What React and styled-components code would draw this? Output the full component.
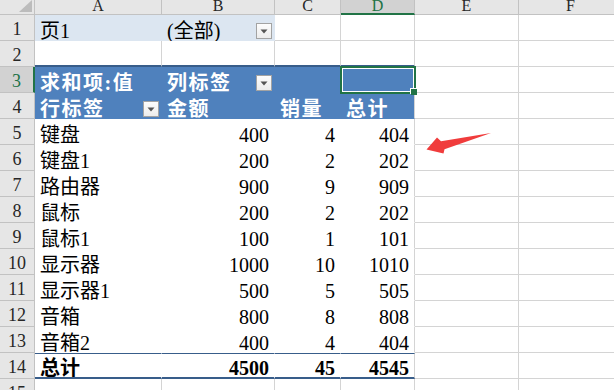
import React from 'react';
import styled, { createGlobalStyle } from 'styled-components';

const GRID = '#d4d4d4';
const BLUE = '#4f81bd';
const DARK = '#385d8a';
const LIGHT = '#dce6f1';
const GREEN = '#217346';
const HEAD = '#e6e6e6';
const HEAD_SEL = '#d2d2d2';
const HEAD_LINE = '#c2c2c2';

const G = `1px solid ${GRID}`;
const NONE = '1px solid transparent';

const Global = createGlobalStyle`
  html, body { margin: 0; padding: 0; background: #fff; overflow: hidden; }
  body { width: 614px; height: 390px; }
`;

const Sheet = styled.div`
  position: relative;
  display: grid;
  grid-template-columns: 35px 127px 113px 66px 74px 104px 104px;
  grid-template-rows: 15px repeat(15, 26px);
  width: 614px;
  height: 390px;
  overflow: hidden;
  font-family: "Liberation Serif", "Noto Sans CJK SC", serif;
`;

const Corner = styled.div`
  box-sizing: border-box;
  background: ${HEAD};
  border-right: 1px solid ${HEAD_LINE};
  border-bottom: 1px solid ${HEAD_LINE};
  display: flex;
  justify-content: flex-end;
  align-items: flex-end;
  padding: 0 2px 2px 0;
`;

const ColHead = styled.div`
  box-sizing: border-box;
  background: ${p => (p.$selected ? HEAD_SEL : HEAD)};
  border-right: 1px solid ${HEAD_LINE};
  border-bottom: ${p => (p.$selected ? `2px solid ${GREEN}` : `1px solid ${HEAD_LINE}`)};
  color: ${p => (p.$selected ? GREEN : '#262626')};
  font-size: 16px;
  line-height: 11px;
  text-align: center;
  overflow: hidden;
`;

const RowHead = styled.div`
  box-sizing: border-box;
  background: ${p => (p.$selected ? HEAD_SEL : HEAD)};
  border-right: ${p => (p.$selected ? `2px solid ${GREEN}` : `1px solid ${HEAD_LINE}`)};
  border-bottom: 1px solid ${HEAD_LINE};
  color: ${p => (p.$selected ? GREEN : '#262626')};
  font-size: 18px;
  line-height: 18px;
  display: flex;
  justify-content: center;
  align-items: flex-end;
  padding-bottom: 2px;
`;

const Cell = styled.div`
  position: relative;
  box-sizing: border-box;
  display: flex;
  align-items: flex-end;
  justify-content: ${p => (p.$align === 'right' ? 'flex-end' : 'space-between')};
  padding: 0 5px 0 5px;
  background: ${p => p.$bg || '#fff'};
  border-top: ${p => p.$top || '0 none'};
  border-right: ${p => p.$right || G};
  border-bottom: ${p => p.$bottom || G};
  color: ${p => (p.$light ? '#fff' : '#000')};
  font-weight: ${p => (p.$bold ? 700 : 400)};
  letter-spacing: ${p => (p.$light ? '1.5px' : '0')};
  font-size: 20px;
  line-height: 18px;
  white-space: nowrap;
  z-index: ${p => (p.$selected ? 2 : 'auto')};
`;

const Text = styled.span`
  display: block;
`;

const DropButton = styled.span`
  box-sizing: border-box;
  width: 16px;
  height: 16px;
  margin: 0 -3px 1px 0;
  border: 1px solid #a3a3a3;
  background: linear-gradient(#fdfdfd, #ececec);
  display: flex;
  align-items: center;
  justify-content: center;
`;

const Selection = styled.div`
  position: absolute;
  left: -1px;
  top: -1px;
  right: -2px;
  bottom: -2px;
  box-sizing: border-box;
  border: 2px solid ${GREEN};
  box-shadow: inset 0 0 0 1px #fff;
  pointer-events: none;
`;

const FillHandle = styled.div`
  position: absolute;
  right: -3px;
  bottom: -3px;
  width: 6px;
  height: 6px;
  background: ${GREEN};
  box-shadow: -1px -1px 0 0 #fff;
`;

const Annotation = styled.svg`
  position: absolute;
  left: 0;
  top: 0;
  width: 614px;
  height: 390px;
  pointer-events: none;
  z-index: 3;
`;

const Caret = () => (
  <svg width="8" height="5" viewBox="0 0 8 5">
    <polygon points="0.5,0.5 7.5,0.5 4,4.5" fill="#555" />
  </svg>
);

const Dropdown = () => (
  <DropButton>
    <Caret />
  </DropButton>
);

const COLS = ['A', 'B', 'C', 'D', 'E', 'F'];

const data = [
  ['键盘', 400, 4, 404],
  ['键盘1', 200, 2, 202],
  ['路由器', 900, 9, 909],
  ['鼠标', 200, 2, 202],
  ['鼠标1', 100, 1, 101],
  ['显示器', 1000, 10, 1010],
  ['显示器1', 500, 5, 505],
  ['音箱', 800, 8, 808],
  ['音箱2', 400, 4, 404],
];

const grid = () => ({});
const blueHead = (text, extra = {}) => ({
  text,
  bg: BLUE,
  light: true,
  bold: true,
  right: NONE,
  bottom: NONE,
  ...extra,
});

function buildRows() {
  const rows = [];
  rows.push([
    { text: '页1', bg: LIGHT, right: NONE, bottom: NONE },
    { text: '(全部)', bg: LIGHT, right: NONE, bottom: NONE, dropdown: true },
    grid(), grid(), grid(), grid(),
  ]);
  const pivotTop = `2px solid ${DARK}`;
  rows.push([
    { bottom: pivotTop },
    { bottom: pivotTop },
    { bottom: pivotTop },
    { bottom: pivotTop },
    grid(), grid(),
  ]);
  rows.push([
    blueHead('求和项:值'),
    blueHead('列标签', { dropdown: true }),
    blueHead(''),
    blueHead('', { right: G, selected: true }),
    grid(), grid(),
  ]);
  rows.push([
    blueHead('行标签', { dropdown: true }),
    blueHead('金额'),
    blueHead('销量'),
    blueHead('总计', { right: G }),
    grid(), grid(),
  ]);
  data.forEach(([name, amt, qty, total]) => {
    rows.push([
      { text: name, right: NONE, bottom: NONE },
      { text: String(amt), align: 'right', right: NONE, bottom: NONE },
      { text: String(qty), align: 'right', right: NONE, bottom: NONE },
      { text: String(total), align: 'right', right: G, bottom: NONE },
      grid(), grid(),
    ]);
  });
  const tTop = `1px solid ${DARK}`;
  const tBottom = `2px solid ${DARK}`;
  rows.push([
    { text: '总计', bold: true, top: tTop, bottom: tBottom, right: NONE },
    { text: '4500', bold: true, align: 'right', top: tTop, bottom: tBottom, right: NONE },
    { text: '45', bold: true, align: 'right', top: tTop, bottom: tBottom, right: NONE },
    { text: '4545', bold: true, align: 'right', top: tTop, bottom: tBottom, right: G },
    grid(), grid(),
  ]);
  rows.push([grid(), grid(), grid(), grid(), grid(), grid()]);
  return rows;
}

export default function App() {
  const rows = buildRows();
  return (
    <>
      <Global />
      <Sheet>
        <Corner>
          <svg width="13" height="12" viewBox="0 0 13 12">
            <polygon points="13,0 13,12 0,12" fill="#bcbcbc" />
          </svg>
        </Corner>
        {COLS.map(c => (
          <ColHead key={c} $selected={c === 'D'}>
            {c}
          </ColHead>
        ))}
        {rows.map((cells, ri) => (
          <React.Fragment key={ri}>
            <RowHead $selected={ri === 2}>{ri + 1}</RowHead>
            {cells.map((c, ci) => (
              <Cell
                key={ci}
                $bg={c.bg}
                $light={c.light}
                $bold={c.bold}
                $align={c.align}
                $top={c.top}
                $right={c.right}
                $bottom={c.bottom}
                $selected={c.selected}
              >
                {c.text ? <Text>{c.text}</Text> : null}
                {c.dropdown ? <Dropdown /> : null}
                {c.selected ? (
                  <Selection>
                    <FillHandle />
                  </Selection>
                ) : null}
              </Cell>
            ))}
          </React.Fragment>
        ))}
        <Annotation viewBox="0 0 614 390">
          <polygon
            points="426.5,149.5 437,137.5 441,141.2 491,133 444.5,149.2 443.5,153.5"
            fill="#f03c3c"
          />
        </Annotation>
      </Sheet>
    </>
  );
}
